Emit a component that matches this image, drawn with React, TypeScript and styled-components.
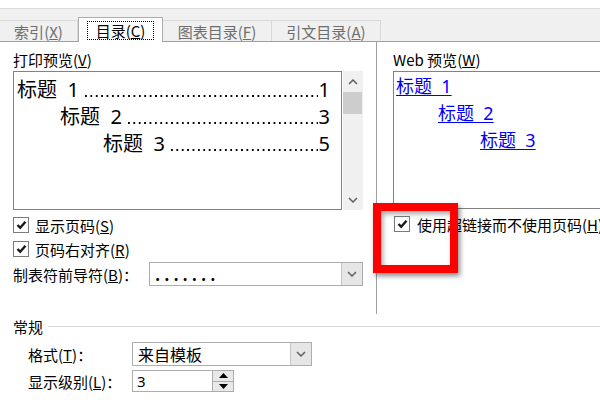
import React from "react";
import styled, { createGlobalStyle } from "styled-components";

const GlobalStyle = createGlobalStyle`
  html, body {
    margin: 0;
    padding: 0;
    background: #fff;
  }
  body {
    font-family: "Noto Sans CJK SC", "Noto Sans", sans-serif;
    font-size: 15px;
    color: #000;
  }
`;

const tabs = [
  { label: "索引", key: "X", width: 78 },
  { label: "目录", key: "C", width: 85, active: true },
  { label: "图表目录", key: "F", width: 109 },
  { label: "引文目录", key: "A", width: 109 },
];

const printEntries = [
  { level: 0, title: "标题\u00a0\u00a01", page: "1" },
  { level: 1, title: "标题\u00a0\u00a02", page: "3" },
  { level: 2, title: "标题\u00a0\u00a03", page: "5" },
];

const Accel = ({ k }: { k: string }) => (
  <span>
    (<u>{k}</u>)
  </span>
);

const Check = () => (
  <CheckBox>
    <svg width="11" height="10" viewBox="0 0 11 10">
      <polyline points="1.5,5 4.2,7.8 9.5,1.8" fill="none" stroke="#1a1a1a" strokeWidth="2.4" />
    </svg>
  </CheckBox>
);

const Chevron = ({ up }: { up?: boolean }) => (
  <svg width="10" height="6" viewBox="0 0 10 6">
    <polyline
      points={up ? "1,5 5,1 9,5" : "1,1 5,5 9,1"}
      fill="none"
      stroke="#606060"
      strokeWidth="1.5"
    />
  </svg>
);

const Dropdown = ({ value, width, spacing = 0 }: { value: string; width: number; spacing?: number }) => (
  <Select $width={width}>
    <SelectValue $spacing={spacing}>{value}</SelectValue>
    <SelectButton>
      <Chevron />
    </SelectButton>
  </Select>
);

const App = () => {
  return (
    <Root>
      <GlobalStyle />
      <TabBar>
        {tabs.map((t) => (
          <Tab key={t.key} $width={t.width} $active={!!t.active}>
            <TabLabel $active={!!t.active}>
              {t.label}
              <Accel k={t.key} />
            </TabLabel>
          </Tab>
        ))}
      </TabBar>

      <Body>
        <LeftPane>
          <Label>
            打印预览<Accel k="V" />
          </Label>
          <PreviewRow>
            <PrintBox>
              {printEntries.map((e) => (
                <PrintEntry key={e.page} $level={e.level}>
                  <span>{e.title}</span>
                  <Leader />
                  <span>{e.page}</span>
                </PrintEntry>
              ))}
            </PrintBox>
            <ScrollBar>
              <ScrollArrow>
                <Chevron up />
              </ScrollArrow>
              <Thumb />
              <ScrollSpace />
              <ScrollArrow>
                <Chevron />
              </ScrollArrow>
            </ScrollBar>
          </PreviewRow>
          <Options>
            <CheckRow>
              <Check />
              <span>
                显示页码<Accel k="S" />
              </span>
            </CheckRow>
            <CheckRow>
              <Check />
              <span>
                页码右对齐<Accel k="R" />
              </span>
            </CheckRow>
            <FieldRow>
              <FieldLabel $width={136}>
                制表符前导符<Accel k="B" />：
              </FieldLabel>
              <Dropdown value="......." width={214} spacing={4} />
            </FieldRow>
          </Options>
        </LeftPane>

        <RightPane>
          <Label>
            Web 预览<Accel k="W" />
          </Label>
          <WebBox>
            {printEntries.map((e) => (
              <WebEntry key={e.page} $level={e.level}>
                <LinkText>{e.title}</LinkText>
              </WebEntry>
            ))}
          </WebBox>
          <WebCheckRow>
            <Check />
            <span>
              使用超链接而不使用页码<Accel k="H" />
            </span>
          </WebCheckRow>
        </RightPane>
      </Body>

      <GroupHeader>
        <span>常规</span>
        <GroupLine />
      </GroupHeader>
      <FormatRow>
        <FieldLabel $width={104}>
          格式<Accel k="T" />：
        </FieldLabel>
        <Dropdown value="来自模板" width={180} />
      </FormatRow>
      <LevelRow>
        <FieldLabel $width={104}>
          显示级别<Accel k="L" />：
        </FieldLabel>
        <Spin>
          <SpinValue>3</SpinValue>
          <SpinButtons>
            <SpinButton>
              <svg width="9" height="5" viewBox="0 0 9 5">
                <polygon points="0,5 4.5,0 9,5" fill="#000" />
              </svg>
            </SpinButton>
            <SpinButton>
              <svg width="9" height="5" viewBox="0 0 9 5">
                <polygon points="0,0 4.5,5 9,0" fill="#000" />
              </svg>
            </SpinButton>
          </SpinButtons>
        </Spin>
      </LevelRow>

      <Highlight />
    </Root>
  );
};

const Root = styled.div`
  position: relative;
  width: 600px;
  height: 400px;
  overflow: hidden;
  background: #fff;
`;

const TabBar = styled.div`
  margin-top: 8px;
  height: 32px;
  display: flex;
  align-items: flex-end;
  background: #f0f0f0;
  border-top: 1px solid #d9d9d9;
  border-bottom: 1px solid #a0a0a0;
`;

const Tab = styled.div<{ $width: number; $active: boolean }>`
  box-sizing: border-box;
  width: ${(p) => p.$width}px;
  height: ${(p) => (p.$active ? 25 : 21)}px;
  margin-bottom: ${(p) => (p.$active ? -1 : 0)}px;
  display: flex;
  align-items: center;
  justify-content: center;
  background: ${(p) => (p.$active ? "#fff" : "#f0f0f0")};
  border-top: 1px solid ${(p) => (p.$active ? "#adadad" : "#d9d9d9")};
  border-right: 1px solid ${(p) => (p.$active ? "#adadad" : "#d9d9d9")};
  border-left: ${(p) => (p.$active ? "1px solid #adadad" : "none")};
  color: ${(p) => (p.$active ? "#000" : "#6d6d6d")};
  font-size: 15px;
  position: relative;
  z-index: ${(p) => (p.$active ? 1 : 0)};
`;

const TabLabel = styled.span<{ $active: boolean }>`
  line-height: 17px;
  padding: 0 ${(p) => (p.$active ? 8 : 0)}px;
  outline: ${(p) => (p.$active ? "1px dotted #000" : "none")};
  white-space: nowrap;
`;

const Body = styled.div`
  display: flex;
  height: 272px;
`;

const LeftPane = styled.div`
  box-sizing: border-box;
  width: 377px;
  padding: 9px 0 0 13px;
  border-right: 1px solid #a0a0a0;
`;

const RightPane = styled.div`
  padding: 9px 0 0 16px;
  flex: 1;
  min-width: 0;
`;

const Label = styled.div`
  height: 18px;
  line-height: 18px;
  margin-bottom: 2px;
  white-space: nowrap;
`;

const PreviewRow = styled.div`
  display: flex;
  gap: 1px;
  height: 139px;
`;

const PrintBox = styled.div`
  box-sizing: border-box;
  width: 329px;
  height: 139px;
  padding: 4px 11px 0 3px;
  border: 1px solid #828282;
  font-family: "Noto Sans", "Noto Sans CJK SC", sans-serif;
  font-size: 20px;
`;

const PrintEntry = styled.div<{ $level: number }>`
  display: flex;
  height: 27px;
  line-height: 27px;
  padding-left: ${(p) => p.$level * 43}px;
  white-space: nowrap;
  color: #000;
`;

const Leader = styled.span`
  flex: 1;
  margin: 0 1px 0 6px;
  background-image: linear-gradient(to right, #000 2px, transparent 2px);
  background-size: 5.4px 2px;
  background-repeat: repeat-x;
  background-position: 0 19px;
`;

const ScrollBar = styled.div`
  width: 20px;
  height: 139px;
  display: flex;
  flex-direction: column;
  background: #f0f0f0;
`;

const ScrollArrow = styled.div`
  height: 21px;
  display: flex;
  align-items: center;
  justify-content: center;
`;

const Thumb = styled.div`
  height: 22px;
  margin-right: 1px;
  background: #cdcdcd;
`;

const ScrollSpace = styled.div`
  flex: 1;
`;

const Options = styled.div`
  margin-top: 3px;
  display: flex;
  flex-direction: column;
`;

const CheckRow = styled.div`
  height: 24px;
  display: flex;
  align-items: center;
  gap: 6px;
  white-space: nowrap;
`;

const CheckBox = styled.span`
  box-sizing: border-box;
  width: 16px;
  height: 16px;
  flex: none;
  display: inline-flex;
  align-items: center;
  justify-content: center;
  border: 1px solid #7a7a7a;
  background: #fff;
`;

const FieldRow = styled.div`
  margin-top: 1px;
  display: flex;
  align-items: center;
`;

const FieldLabel = styled.span<{ $width: number }>`
  width: ${(p) => p.$width}px;
  flex: none;
  white-space: nowrap;
`;

const Select = styled.div<{ $width: number }>`
  box-sizing: border-box;
  width: ${(p) => p.$width}px;
  height: 24px;
  display: flex;
  border: 1px solid #adadad;
  background: #fff;
`;

const SelectValue = styled.div<{ $spacing: number }>`
  flex: 1;
  padding-left: 5px;
  line-height: 22px;
  font-size: 16px;
  font-weight: ${(p) => (p.$spacing ? 700 : 400)};
  letter-spacing: ${(p) => p.$spacing}px;
`;

const SelectButton = styled.div`
  width: 20px;
  display: flex;
  align-items: center;
  justify-content: center;
  background: #e6e6e6;
  border-left: 1px solid #c4c4c4;
`;

const WebBox = styled.div`
  box-sizing: border-box;
  width: 215px;
  height: 138px;
  padding: 1px 0 0 2px;
  border: 1px solid #828282;
  font-family: "Noto Sans", "Noto Sans CJK SC", sans-serif;
  font-size: 18px;
`;

const WebEntry = styled.div<{ $level: number }>`
  height: 27px;
  line-height: 27px;
  padding-left: ${(p) => p.$level * 42}px;
  white-space: nowrap;
`;

const LinkText = styled.span`
  color: #0000ff;
  text-decoration: underline;
  text-underline-offset: 2px;
`;

const WebCheckRow = styled(CheckRow)`
  margin-top: 3px;
  padding-left: 1px;
  gap: 7px;
`;

const GroupHeader = styled.div`
  margin-top: 3px;
  padding-left: 13px;
  height: 18px;
  display: flex;
  align-items: center;
  gap: 5px;
`;

const GroupLine = styled.div`
  flex: 1;
  height: 1px;
  background: #dadada;
`;

const FormatRow = styled.div`
  margin-top: 7px;
  padding-left: 28px;
  display: flex;
  align-items: center;
`;

const LevelRow = styled(FormatRow)`
  margin-top: 4px;
`;

const Spin = styled.div`
  box-sizing: border-box;
  width: 102px;
  height: 22px;
  display: flex;
  border: 1px solid #adadad;
`;

const SpinValue = styled.div`
  flex: 1;
  padding-left: 4px;
  line-height: 20px;
  font-size: 15px;
  font-family: "Noto Sans", sans-serif;
`;

const SpinButtons = styled.div`
  width: 20px;
  display: flex;
  flex-direction: column;
  border-left: 1px solid #adadad;
`;

const SpinButton = styled.div`
  flex: 1;
  display: flex;
  align-items: center;
  justify-content: center;
  background: #e8e8e8;
  & + & {
    border-top: 1px solid #adadad;
  }
`;

const Highlight = styled.div`
  position: absolute;
  left: 373px;
  top: 203px;
  width: 85px;
  height: 70px;
  box-sizing: border-box;
  border: 8px solid #ff0000;
  box-shadow: 2px 3px 5px rgba(0, 0, 0, 0.45), inset 2px 3px 5px rgba(0, 0, 0, 0.35);
`;

export default App;
